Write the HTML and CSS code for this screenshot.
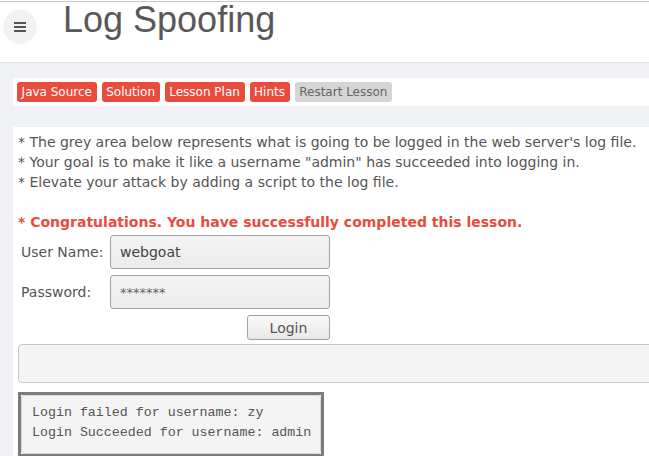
FILE: index.html
```html
<!DOCTYPE html>
<html lang="en">
<head>
    <meta charset="UTF-8">
    <title>Log Spoofing</title>
    <link rel="stylesheet" href="styles.css">
</head>
<body>

<div class="top-rule"></div>

<!-- Lesson header -->
<div class="header">
    <div class="menu-toggle">
        <span></span><span></span><span></span>
    </div>
    <h1 class="lesson-title">Log Spoofing</h1>
</div>

<!-- Lesson buttons -->
<div class="lesson-bar">
    <a class="btn btn-red">Java Source</a>
    <a class="btn btn-red">Solution</a>
    <a class="btn btn-red">Lesson Plan</a>
    <a class="btn btn-red">Hints</a>
    <a class="btn btn-grey">Restart Lesson</a>
</div>

<!-- Lesson content -->
<div class="lesson-content">
    <div class="instructions">
        * The grey area below represents what is going to be logged in the web server's log file.<br>
        * Your goal is to make it like a username "admin" has succeeded into logging in.<br>
        * Elevate your attack by adding a script to the log file.<br>
        <br>
        <b class="message">* Congratulations. You have successfully completed this lesson.</b>
    </div>

    <div class="login-form">
        <div class="form-row">
            <label class="form-label">User Name:</label>
            <input class="form-input" type="text" value="webgoat">
        </div>
        <div class="form-row">
            <label class="form-label">Password:</label>
            <input class="form-input pwd" type="text" value="*******">
        </div>
        <div class="form-row submit-row">
            <button class="login-btn">Login</button>
        </div>
    </div>

    <div class="grey-area"></div>

    <div class="log-box">
        <div class="log-inner">
            Login failed for username: zy<br>
            Login Succeeded for username: admin
        </div>
    </div>
</div>

</body>
</html>
```

FILE: styles.css
```css
/* Page */
body {
    margin: 0;
    background-color: #f0f1f5;
    font-family: 'DejaVu Sans', sans-serif;
    color: #555;
    overflow: hidden;
}

.top-rule {
    height: 1px;
    background: #fff;
    border-bottom: 1px solid #c9c9c9;
}

/* Header */
.header {
    display: flex;
    align-items: flex-start;
    height: 60px;
    background: #fff;
    border-bottom: 1px solid #e3e4e8;
}

.menu-toggle {
    width: 34px;
    height: 34px;
    margin: 8px 0 0 3px;
    border-radius: 50%;
    background: #f2f2f2;
    display: flex;
    flex-direction: column;
    justify-content: center;
    align-items: center;
    gap: 2px;
}

.menu-toggle span {
    display: block;
    width: 12px;
    height: 2px;
    background: #555;
}

.lesson-title {
    margin: 0 0 0 26px;
    font-family: 'Liberation Sans', Arial, sans-serif;
    font-weight: normal;
    font-size: 36px;
    line-height: 36px;
    color: #58585a;
}

/* Lesson buttons */
.lesson-bar {
    display: flex;
    gap: 5px;
    margin: 15px 0 0 13px;
    padding: 4px;
    background: #fff;
}

.btn {
    font-size: 12px;
    line-height: 20px;
    padding: 0 4.6px;
    border-radius: 3px;
}

.btn-red {
    background: #e74c3c;
    color: #fff;
}

.btn-grey {
    background: #d5d5d5;
    color: #666;
}

/* Content panel */
.lesson-content {
    margin: 21px 0 0 13px;
    padding: 5px 0 0 5px;
    background: #fff;
}

.instructions {
    font-size: 14px;
    line-height: 20px;
    color: #555;
}

.message {
    color: #e74c3c;
}

/* Login form */
.login-form {
    padding: 3px 0 0 3px;
}

.form-row {
    display: flex;
    align-items: center;
    margin-bottom: 6px;
}

.form-label {
    width: 89px;
    font-size: 14px;
}

.form-input {
    box-sizing: border-box;
    width: 220px;
    height: 34px;
    padding: 0 9px;
    border: 1px solid #a3a3a3;
    border-radius: 3px;
    background: linear-gradient(#f3f3f3, #ebebeb);
    font-family: 'DejaVu Sans', sans-serif;
    font-size: 14px;
    color: #444;
}

.form-input.pwd {
    font-size: 13px;
    color: #666;
}

.submit-row {
    justify-content: flex-end;
    width: 309px;
    margin-bottom: 4px;
}

.login-btn {
    box-sizing: border-box;
    width: 83px;
    height: 25px;
    border: 1px solid #a3a3a3;
    border-radius: 3px;
    background: linear-gradient(#fafafa, #e8e8e8);
    font-family: 'DejaVu Sans', sans-serif;
    font-size: 14px;
    color: #555;
    padding: 0;
}

/* Grey area */
.grey-area {
    height: 37px;
    margin-right: -20px;
    border: 1px solid #c8c8c8;
    border-radius: 4px;
    background: #f4f4f4;
}

/* Log output */
.log-box {
    width: 300px;
    margin-top: 9px;
    border: 3px solid #7c7c7c;
}

.log-inner {
    border: 1px solid #d8d8d8;
    border-radius: 3px;
    background: #f4f4f4;
    padding: 7px 0 10px 10px;
    font-family: 'Liberation Mono', 'Courier New', monospace;
    font-size: 13.3px;
    line-height: 20px;
    color: #555;
}
```
